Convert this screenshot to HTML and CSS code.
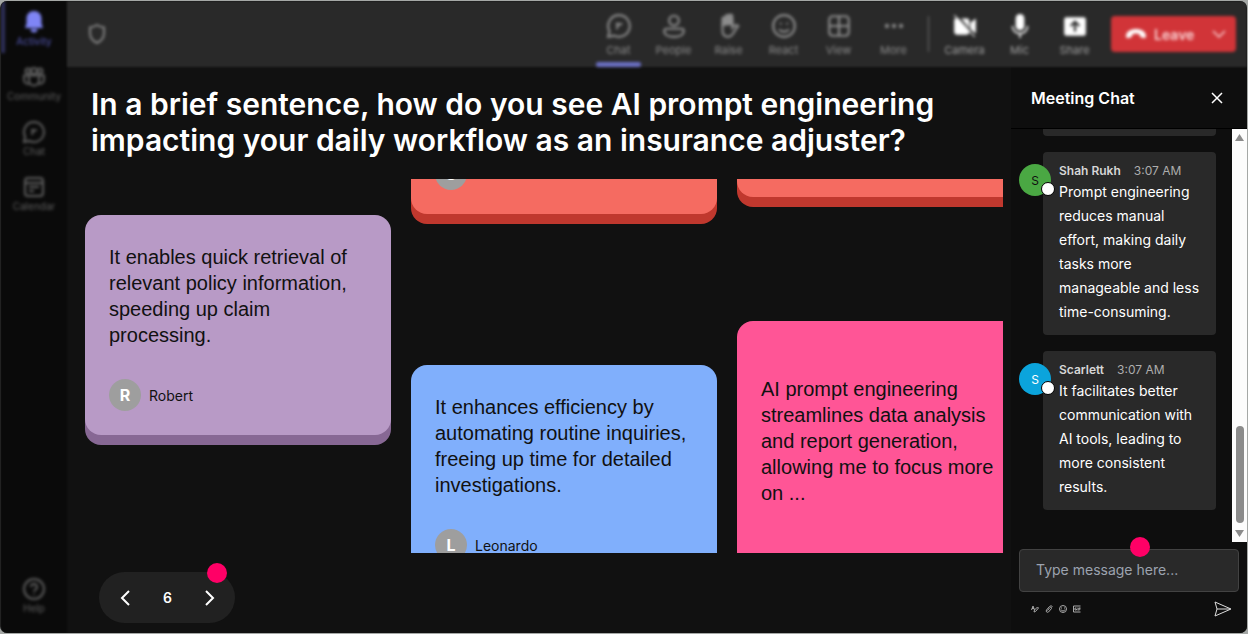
FILE: index.html
```html
<!DOCTYPE html>
<html lang="en">
<head>
    <meta charset="UTF-8">
    <meta name="viewport" content="width=device-width, initial-scale=1.0">
    <title>Meeting</title>
    <link rel="stylesheet" href="styles.css">
</head>
<body>
    <div class="window">
        <nav class="sidebar">
            <a href="#" class="side-link active">
                <svg width="22" height="24" viewBox="0 0 22 24"><path d="M11 1c-4.500 0-7.500 3.300-7.500 7.500v5L2 18h18l-1.500-4.500v-5C18.500 4.300 15.500 1 11 1z" fill="currentColor"/><path d="M7.500 19h7a3.500 3.500 0 0 1-7 0z" fill="currentColor"/></svg>
                Activity
            </a>
            <a href="#" class="side-link">
                <svg width="24" height="24" viewBox="0 0 24 24" class="line"><circle cx="6" cy="6" r="2.500"/><circle cx="12" cy="6" r="3"/><circle cx="18" cy="6" r="2.500"/><path d="M7 10.500h10v5a5 5 0 0 1-10 0zM7 10.500H2v4a4 4 0 0 0 5.500 4M17 10.500h5v4a4 4 0 0 1-5.500 4"/></svg>
                Community
            </a>
            <a href="#" class="side-link">
                <svg width="24" height="24" viewBox="0 0 24 24" class="line"><path d="M12 2a10 10 0 1 1-4.600 18.900L2 22l1.200-5.200A10 10 0 0 1 12 2z"/><path d="M10 15c0-3 1-5 5-5M9 10h3"/></svg>
                Chat
            </a>
            <a href="#" class="side-link">
                <svg width="24" height="24" viewBox="0 0 24 24" class="line"><rect x="3" y="3" width="18" height="18" rx="3"/><path d="M3 8h18M7 12h10M7 16h5"/></svg>
                Calendar
            </a>
            <a href="#" class="side-link help">
                <svg width="24" height="24" viewBox="0 0 24 24" class="line"><circle cx="12" cy="12" r="10"/><path d="M9 10a3 3 0 1 1 4.500 2.500c-1 .6-1.500 1-1.500 2.500M12 17v1"/></svg>
                Help
            </a>
        </nav>

        <div class="main">
            <header class="topbar">
                <svg class="shield line" width="20" height="22" viewBox="0 0 20 22"><path d="M10 2c2.500 1.600 4.500 2.200 7 2.400V10c0 5-2.500 8-7 10-4.500-2-7-5-7-10V4.400C5.500 4.200 7.500 3.600 10 2z"/></svg>
                <button type="button" class="tool selected">
                    <svg width="26" height="26" viewBox="0 0 24 24" class="line"><path d="M12 2a10 10 0 1 1-4.600 18.900L2 22l1.200-5.200A10 10 0 0 1 12 2z"/><path d="M10 15c0-3 1-5 5-5M9 10h3"/></svg>
                    Chat
                </button>
                <button type="button" class="tool">
                    <svg width="26" height="26" viewBox="0 0 24 24" class="line"><circle cx="12" cy="7" r="4.500"/><path d="M5 14.500h14a2 2 0 0 1 2 2c0 3.500-4 5.500-9 5.500s-9-2-9-5.500a2 2 0 0 1 2-2z"/></svg>
                    People
                </button>
                <button type="button" class="tool">
                    <svg width="26" height="26" viewBox="0 0 24 24" class="line"><path d="M6 12V5.500a1.500 1.500 0 0 1 3 0V3.500a1.500 1.500 0 0 1 3 0V3a1.500 1.500 0 0 1 3 0v8" fill="currentColor"/><path d="M6 10v6c0 4 2 6 5 6 4 0 5-3 6.500-6l3-4c-1.500-1.500-3.500-1-5.500 1.500V5"/></svg>
                    Raise
                </button>
                <button type="button" class="tool">
                    <svg width="26" height="26" viewBox="0 0 24 24" class="line"><circle cx="12" cy="12" r="10"/><path d="M7.500 15c2 3 7 3 9 0M9 9v1.500M15 9v1.500"/></svg>
                    React
                </button>
                <button type="button" class="tool">
                    <svg width="26" height="26" viewBox="0 0 24 24" class="line"><rect x="3" y="3" width="18" height="18" rx="3"/><path d="M12 3v18M3 12h18"/></svg>
                    View
                </button>
                <button type="button" class="tool">
                    <svg width="26" height="26" viewBox="0 0 24 24" fill="currentColor"><circle cx="5.500" cy="12" r="2"/><circle cx="12" cy="12" r="2"/><circle cx="18.500" cy="12" r="2"/></svg>
                    More
                </button>
                <span class="divider"></span>
                <button type="button" class="tool device">
                    <svg width="26" height="26" viewBox="0 0 24 24"><path d="M3 5h11a2 2 0 0 1 2 2v10a3 3 0 0 1-3 3H5a3 3 0 0 1-3-3V6zM17 9l5-4v14l-5-4z" fill="currentColor"/><path d="M4 1l18 22" stroke="#292929" stroke-width="2"/><path d="M2 2l19 20" stroke="currentColor" stroke-width="1"/></svg>
                    Camera
                </button>
                <button type="button" class="tool device">
                    <svg width="26" height="26" viewBox="0 0 24 24"><rect x="8" y="1" width="8" height="15" rx="4" fill="currentColor"/><path d="M5 12a7 7 0 0 0 14 0M12 19v4" fill="none" stroke="currentColor" stroke-width="1.500"/></svg>
                    Mic
                </button>
                <button type="button" class="tool device">
                    <svg width="26" height="26" viewBox="0 0 24 24"><rect x="2" y="4" width="20" height="17" rx="2" fill="currentColor"/><path d="M12 17V8M8 12l4-4 4 4" fill="none" stroke="#292929" stroke-width="2"/></svg>
                    Share
                </button>
                <button type="button" class="leave">
                    <svg width="22" height="22" viewBox="0 0 22 22"><path d="M11 6c5 0 10 2.500 10 7 0 2-1 2.300-2.500 2l-2.300-.6c-1.200-.4-1.500-3-2.200-3.400-1.500-.7-4.500-.7-6 0-.7.400-1 3-2.200 3.400L3.500 15C2 15.300 1 15 1 13c0-4.500 5-7 10-7z" fill="currentColor"/></svg>
                    Leave
                    <svg class="caret" width="14" height="14" viewBox="0 0 14 14"><path d="M1 4l6 6 6-6" fill="none" stroke="currentColor" stroke-width="1.500"/></svg>
                </button>
            </header>

            <div class="content">
                <section class="stage">
                    <h1>In a brief sentence, how do you see AI prompt engineering impacting your daily workflow as an insurance adjuster?</h1>

                    <div class="board">
                        <div class="column first">
                            <article class="card purple">
                                <p>It enables quick retrieval of relevant policy information, speeding up claim processing.</p>
                                <div class="author"><span class="initial">R</span>Robert</div>
                            </article>
                        </div>
                        <div class="column second">
                            <article class="card coral cut">
                                <div class="author"><span class="initial">S</span></div>
                            </article>
                            <article class="card blue">
                                <p>It enhances efficiency by automating routine inquiries, freeing up time for detailed investigations.</p>
                                <div class="author"><span class="initial">L</span>Leonardo</div>
                            </article>
                        </div>
                        <div class="column third">
                            <article class="card coral cut"></article>
                            <article class="card pink">
                                <p>AI prompt engineering streamlines data analysis and report generation, allowing me to focus more on ...</p>
                            </article>
                        </div>
                    </div>

                    <div class="pager">
                        <button type="button" aria-label="Previous">
                            <svg width="12" height="18" viewBox="0 0 12 18"><path d="M10 2L3 9l7 7"/></svg>
                        </button>
                        <span>6</span>
                        <button type="button" aria-label="Next">
                            <svg width="12" height="18" viewBox="0 0 12 18"><path d="M2 2l7 7-7 7"/></svg>
                        </button>
                        <i class="dot"></i>
                    </div>
                </section>

                <aside class="chat">
                    <div class="chat-header">
                        <h2>Meeting Chat</h2>
                        <button type="button" aria-label="Close">
                            <svg width="12" height="12" viewBox="0 0 12 12"><path d="M1 1l10 10M11 1L1 11" stroke="currentColor" stroke-width="1.500"/></svg>
                        </button>
                    </div>
                    <div class="chat-body">
                        <div class="messages">
                            <div class="message"><div class="bubble previous"></div></div>
                            <div class="message">
                                <span class="avatar green">S</span>
                                <div class="bubble">
                                    <div class="meta"><b>Shah Rukh</b><time>3:07 AM</time></div>
                                    <p>Prompt engineering reduces manual effort, making daily tasks more manageable and less time-consuming.</p>
                                </div>
                            </div>
                            <div class="message">
                                <span class="avatar cyan">S</span>
                                <div class="bubble">
                                    <div class="meta"><b>Scarlett</b><time>3:07 AM</time></div>
                                    <p>It facilitates better communication with AI tools, leading to more consistent results.</p>
                                </div>
                            </div>
                        </div>
                        <div class="scrollbar">
                            <svg width="9" height="7" viewBox="0 0 9 7"><path d="M4.500 0L9 7H0z"/></svg>
                            <span class="thumb"></span>
                            <svg width="9" height="7" viewBox="0 0 9 7"><path d="M4.500 7L0 0h9z"/></svg>
                        </div>
                    </div>
                    <form class="composer">
                        <div class="field">
                            <input type="text" aria-label="Message" placeholder="Type message here...">
                            <i class="dot"></i>
                        </div>
                        <div class="actions">
                            <button type="button" aria-label="Format">
                                <svg width="8" height="8" viewBox="0 0 16 16"><path d="M1 10L4 2l3 8M2 7h4M6 14l1-4 6-6 2 2-6 7z"/></svg>
                            </button>
                            <button type="button" aria-label="Attach">
                                <svg width="8" height="8" viewBox="0 0 16 16"><path d="M5 11l5-6c2-2 4 0 3 2l-6 7c-3 2-6-1-4-4l6-7c2-2 5-1 6 0"/></svg>
                            </button>
                            <button type="button" aria-label="Emoji">
                                <svg width="8" height="8" viewBox="0 0 16 16"><circle cx="8" cy="8" r="7"/><path d="M4 9c1 4 7 4 8 0M5 5v2M11 5v2"/></svg>
                            </button>
                            <button type="button" aria-label="GIF">
                                <svg width="8" height="8" viewBox="0 0 16 16"><path d="M15 2H1v12h14M7 6H4v4h3V8M10 5v6M12 11V6h3M12 8h3"/></svg>
                            </button>
                            <button type="submit" class="send" aria-label="Send">
                                <svg width="18" height="16" viewBox="0 0 18 16"><path d="M1 1l16 7-16 7 2-7zM3 8h13"/></svg>
                            </button>
                        </div>
                    </form>
                </aside>
            </div>
        </div>
    </div>
</body>
</html>
```
FILE: styles.css
```css
:root {
    --bg: #111;
    --panel: #0e0e0e;
    --surface: #292929;
    --accent: #7f85f5;
    --hot: #ff0066;
}

* {
    box-sizing: border-box;
}

body {
    margin: 0;
    height: 100vh;
    padding: 1px 1px 1px 0;
    background-color: #a5a8a6;
    font-family: Inter, "Liberation Sans", sans-serif;
    color: #fff;
}

h1, h2, p {
    margin: 0;
}

button {
    background: none;
    border: none;
    padding: 0;
    color: inherit;
    font-family: inherit;
    cursor: pointer;
}

svg {
    display: block;
    flex: none;
}

.line {
    fill: none;
    stroke: currentColor;
    stroke-width: 2;
}

.window {
    display: flex;
    height: 100%;
    border-left: 1px solid #222;
    border-radius: 7px;
    overflow: hidden;
    background-color: var(--bg);
}

/* left navigation */
.sidebar {
    flex: none;
    width: 66px;
    display: flex;
    flex-direction: column;
    background-color: #0a0a0a;
    filter: blur(1px);
}

.side-link {
    height: 55px;
    padding-top: 9px;
    display: flex;
    flex-direction: column;
    align-items: center;
    gap: 1px;
    color: #606060;
    font-size: 10px;
    line-height: 12px;
    text-decoration: none;
    filter: blur(1px);
}

.side-link.active {
    height: 52px;
    margin-bottom: 3px;
    border-left: 4px solid #30315c;
    padding-right: 4px;
    color: #5558b5;
}

.side-link.active svg {
    color: var(--accent);
}

.side-link.help {
    margin-top: auto;
    margin-bottom: 10px;
}

.main {
    flex: 1;
    min-width: 0;
    display: flex;
    flex-direction: column;
}

/* meeting toolbar */
.topbar {
    flex: none;
    height: 66px;
    padding-right: 11px;
    display: flex;
    align-items: center;
    background-color: var(--surface);
    filter: blur(1px);
}

.topbar > * {
    filter: blur(1px);
}

.shield {
    margin-left: 20px;
    margin-right: auto;
    color: #858585;
}

.tool {
    position: relative;
    width: 55px;
    height: 100%;
    padding-top: 2px;
    display: flex;
    flex-direction: column;
    align-items: center;
    justify-content: center;
    gap: 4px;
    color: #8c8c8c;
    font-size: 11px;
    line-height: 14px;
}

.tool.selected::after {
    content: "";
    position: absolute;
    left: 5px;
    right: 5px;
    bottom: 0;
    height: 5px;
    border-radius: 2px;
    background-color: #6b70c4;
}

.tool.device {
    color: #a0a0a0;
}

.tool.device svg {
    color: #fff;
}

.divider {
    width: 1px;
    height: 36px;
    margin: 0 8px 0 7px;
    background-color: #707070;
}

.leave {
    width: 125px;
    height: 36px;
    margin-left: 9px;
    padding: 0 10px 0 14px;
    display: flex;
    align-items: center;
    gap: 7px;
    border-radius: 4px;
    background-color: #d13438;
    color: #fbd6d7;
    font-size: 14px;
    font-weight: 600;
}

.leave svg:first-child {
    color: #fff;
}

.leave .caret {
    margin-left: auto;
}

.content {
    flex: 1;
    min-height: 0;
    display: flex;
}

/* question and answers */
.stage {
    flex: 1;
    min-width: 0;
    padding: 19px 8px 10px 18px;
    display: flex;
    flex-direction: column;
}

h1 {
    padding: 0 6px;
    font-size: 30px;
    font-weight: 600;
    line-height: 36px;
}

.board {
    flex: 1;
    min-height: 0;
    margin-top: 21px;
    display: flex;
    gap: 20px;
    overflow: hidden;
}

.column {
    flex: none;
    width: 306px;
    display: flex;
    flex-direction: column;
}

.column.first {
    padding-top: 36px;
}

.column.second {
    gap: 151px;
}

.column.third {
    gap: 124px;
}

.card {
    flex: none;
    padding: 29px 24px 24px;
    border-radius: 16px;
    color: #111;
}

.card p {
    font-family: "Liberation Sans", Arial, sans-serif;
    font-size: 20px;
    line-height: 26px;
}

.author {
    margin-top: 31px;
    display: flex;
    align-items: center;
    gap: 8px;
    font-size: 14px;
}

.initial {
    width: 32px;
    height: 32px;
    display: flex;
    align-items: center;
    justify-content: center;
    border-radius: 50%;
    background-color: #9e9e9e;
    color: #fff;
    font-size: 16px;
    font-weight: 700;
}

.purple {
    background-color: #b89ac6;
    box-shadow: 0 10px 0 #876894;
}

.blue {
    background-color: #80affc;
    box-shadow: 0 10px 0 #4f7fce;
}

.pink {
    min-height: 260px;
    padding-top: 55px;
    background-color: #ff5596;
    box-shadow: 0 10px 0 #c92a66;
}

.coral {
    background-color: #f56b61;
    box-shadow: 0 10px 0 #c0382e;
}

/* cards scrolled past the top edge of the board */
.card.cut {
    height: 100px;
    margin-top: -65px;
    padding-top: 0;
    display: flex;
    flex-direction: column;
    justify-content: flex-end;
}

.third .card.cut {
    margin-top: -82px;
}

.pager {
    position: relative;
    align-self: flex-start;
    width: 136px;
    height: 51px;
    margin: 19px 0 0 14px;
    padding: 0 19px 0 20px;
    display: flex;
    align-items: center;
    justify-content: space-between;
    border-radius: 26px;
    background-color: #212121;
    font-size: 14px;
    font-weight: 600;
}

.pager svg {
    fill: none;
    stroke: #fff;
    stroke-width: 2;
}

.dot {
    position: absolute;
    width: 20px;
    height: 20px;
    border-radius: 50%;
    background-color: var(--hot);
}

.pager .dot {
    top: -9px;
    right: 8px;
}

/* chat panel */
.chat {
    flex: none;
    width: 236px;
    display: flex;
    flex-direction: column;
    background-color: var(--panel);
}

.chat-header {
    flex: none;
    height: 62px;
    padding: 0 24px 0 20px;
    display: flex;
    align-items: center;
    justify-content: space-between;
    border-bottom: 1px solid #000;
}

h2 {
    font-size: 16px;
    font-weight: 600;
    line-height: 20px;
}

.chat-body {
    flex: 1;
    min-height: 0;
    display: flex;
}

.messages {
    flex: 1;
    padding: 0 16px 32px 8px;
    display: flex;
    flex-direction: column;
    justify-content: flex-end;
    gap: 16px;
    overflow: hidden;
}

.message {
    display: flex;
    justify-content: flex-end;
}

.avatar {
    position: relative;
    flex: none;
    width: 32px;
    height: 32px;
    margin: 12px -8px 0 0;
    display: flex;
    align-items: center;
    justify-content: center;
    border-radius: 50%;
    font-size: 12px;
}

.avatar::after {
    content: "";
    position: absolute;
    right: -4px;
    bottom: 0;
    width: 12px;
    height: 12px;
    border: 1px solid #000;
    border-radius: 50%;
    background-color: #fff;
}

.green {
    background-color: #4aa843;
    color: #111;
}

.cyan {
    background-color: #0ba4dc;
}

.bubble {
    width: 173px;
    padding: 10px 16px 11px;
    border-radius: 4px;
    background-color: var(--surface);
    font-size: 14px;
    line-height: 24px;
}

.bubble.previous {
    height: 32px;
}

.meta {
    display: flex;
    gap: 13px;
    font-size: 12px;
    line-height: 18px;
    color: #d6d6d6;
}

.meta b {
    font-weight: 600;
}

.meta time {
    color: #adadad;
}

.scrollbar {
    flex: none;
    width: 15px;
    padding: 5px 0;
    display: flex;
    flex-direction: column;
    align-items: center;
    background-color: #fcfcfc;
    fill: #8b8b8b;
}

.thumb {
    width: 8px;
    height: 97px;
    margin: auto 0 7px;
    border-radius: 4px;
    background-color: #8b8b8b;
}

.composer {
    flex: none;
    padding: 7px 8px 16px;
}

.field {
    position: relative;
}

.field input {
    display: block;
    width: 100%;
    height: 43px;
    padding: 0 16px 2px;
    border: 1px solid #424242;
    border-radius: 4px;
    background-color: var(--surface);
    color: #fff;
    font-family: inherit;
    font-size: 14px;
}

.field input::placeholder {
    color: #9ca3af;
}

.field .dot {
    top: -12px;
    left: 111px;
}

.actions {
    margin-top: 9px;
    padding: 0 7px 0 12px;
    display: flex;
    align-items: center;
    gap: 6px;
}

.actions svg {
    fill: none;
    stroke: #a8a8a8;
    stroke-width: 2;
}

.actions .send {
    margin-left: auto;
}

.actions .send svg {
    stroke: #ddd;
    stroke-width: 1;
}
```
